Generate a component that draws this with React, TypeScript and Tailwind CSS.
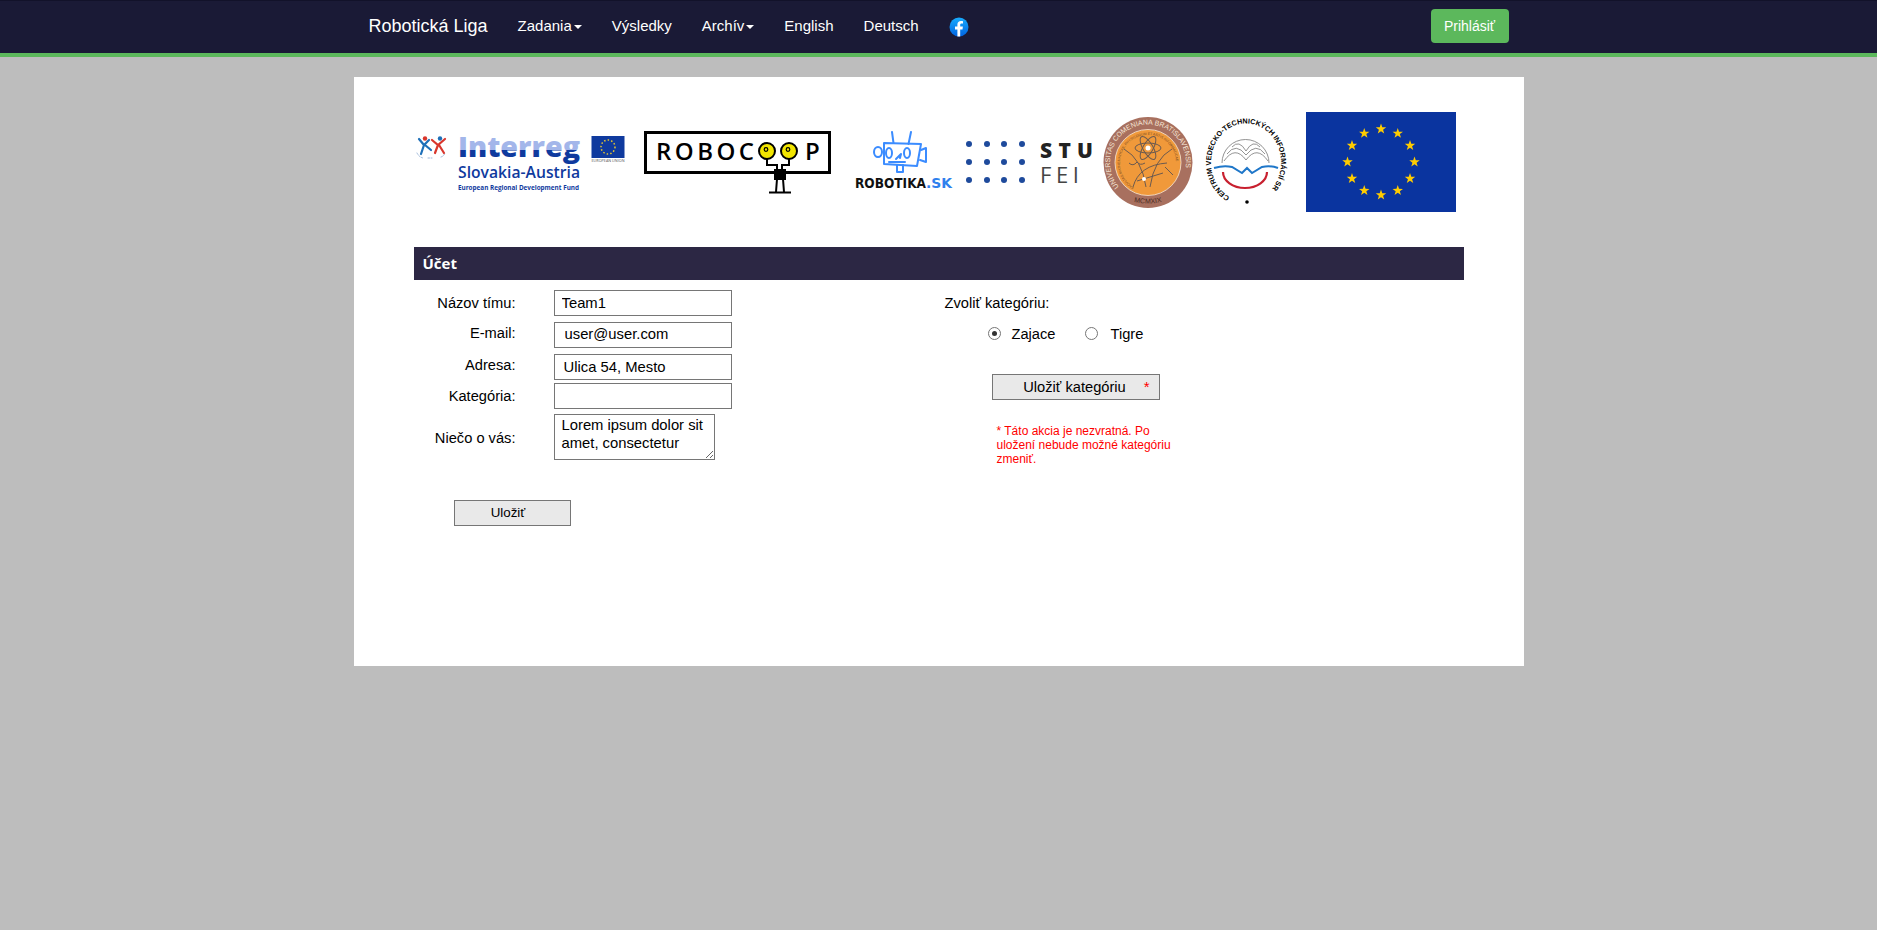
import React from "react";

const sans = "font-['Liberation_Sans',Arial,sans-serif]";

function Caret() {
  return <span className="ml-[2px] inline-block align-middle w-0 h-0 border-x-[4px] border-x-transparent border-t-[4px] border-t-white" />;
}

function NavLink({ children }: { children: React.ReactNode }) {
  return <a className="px-[15px] text-[15px] leading-[20px] text-white whitespace-nowrap">{children}</a>;
}

function Facebook() {
  return (
    <svg width="20" height="20" viewBox="0 0 20 20" className="ml-[15px] mt-[2px]">
      <defs>
        <linearGradient id="fbg" x1="0" y1="0" x2="0" y2="1">
          <stop offset="0" stopColor="#18acfe" />
          <stop offset="1" stopColor="#0163e0" />
        </linearGradient>
      </defs>
      <circle cx="10" cy="10" r="9.5" fill="url(#fbg)" />
      <path d="M11.2 19.4v-7h2.3l.4-2.8h-2.7V8c0-.8.3-1.4 1.5-1.4h1.3V4.2c-.5-.1-1.2-.2-2-.2-2.2 0-3.6 1.3-3.6 3.6v2H6v2.800h2.400v7z" fill="#fff" />
    </svg>
  );
}

function Interreg() {
  return (
    <svg width="210" height="66" viewBox="0 0 210 66" className="ml-[2px]">
      <g fill="none" strokeLinecap="round">
        <circle cx="9" cy="9.500" r="2.200" fill="#d9362c" />
        <circle cx="24" cy="9.500" r="2.200" fill="#1e6fb8" />
        <path d="M3 10l5 6 5-5M8 16l-3 9M9 16l6 5" stroke="#1e6fb8" strokeWidth="2.200" />
        <path d="M16 11l6 5 7-6M22 16l-3 8M23 16l5 8" stroke="#d9362c" strokeWidth="2.200" />
        <path d="M1 24q2 4 6 5M12 29h4M25 28q3-1 4-4" stroke="#9db7d9" strokeWidth="1" strokeDasharray="1.500 1.500" />
      </g>
      <defs>
        <linearGradient id="irg" gradientUnits="userSpaceOnUse" x1="0" y1="7" x2="0" y2="34">
          <stop offset="0.520" stopColor="#a3b6ea" />
          <stop offset="0.530" stopColor="#0f3a9e" />
        </linearGradient>
      </defs>
      <text x="42" y="28" fontFamily="'Open Sans',sans-serif" fontWeight="800" fontSize="29" textLength="122" lengthAdjust="spacingAndGlyphs" fill="url(#irg)">Interreg</text>
      <text x="42" y="49" fontFamily="'Open Sans',sans-serif" fontWeight="600" fontSize="16" textLength="122" lengthAdjust="spacingAndGlyphs" fill="#0f3a9e">Slovakia-Austria</text>
      <text x="42" y="61" fontFamily="'Open Sans',sans-serif" fontWeight="700" fontSize="6.500" textLength="121" lengthAdjust="spacingAndGlyphs" fill="#0f3a9e">European Regional Development Fund</text>
      <rect x="175.500" y="7" width="33" height="22" fill="#0f3a9e" />
      <circle cx="192" cy="18" r="7" fill="none" stroke="#e8c830" strokeWidth="1.500" strokeDasharray="1.500 2.100" />
      <text x="175.500" y="33" fontFamily="'Open Sans',sans-serif" fontSize="3" textLength="33" lengthAdjust="spacingAndGlyphs" fill="#555">EUROPEAN UNION</text>
    </svg>
  );
}

function Robocoop() {
  return (
    <svg width="187" height="63" viewBox="0 0 187 63" className="ml-[18px]">
      <rect x="1.500" y="1.500" width="184" height="40" fill="#fff" stroke="#000" strokeWidth="3" />
      <text x="12" y="29" fontFamily="'Open Sans',sans-serif" fontWeight="600" fontSize="24" textLength="98" fill="#000">ROBOC</text>
      <text x="161" y="29" fontFamily="'Open Sans',sans-serif" fontWeight="600" fontSize="24" fill="#000">P</text>
      <path d="M123 28v6h10v6M145 28v6h-7v6" fill="none" stroke="#000" strokeWidth="2" />
      <circle cx="123" cy="20" r="8" fill="#f2e500" stroke="#000" strokeWidth="2" />
      <circle cx="122" cy="18.500" r="1.800" fill="none" stroke="#000" strokeWidth="1.200" />
      <circle cx="145" cy="20" r="8" fill="#f2e500" stroke="#000" strokeWidth="2" />
      <circle cx="144" cy="18.500" r="1.800" fill="none" stroke="#000" strokeWidth="1.200" />
      <rect x="130" y="38" width="12" height="11" fill="#000" />
      <path d="M133 48l-1 13M139 48l1 13M125 61.500h22" fill="none" stroke="#000" strokeWidth="2" />
    </svg>
  );
}

function Robotika() {
  return (
    <svg width="98" height="62" viewBox="0 0 98 62" className="ml-[24px]">
      <g fill="none" stroke="#3b8cff" strokeWidth="2" strokeLinejoin="round" strokeLinecap="round">
        <path d="M37 1l1.500 11M56 1l-2.500 12" />
        <path d="M29 12L66 13 62 35 29 33Z" />
        <ellipse cx="23" cy="21" rx="4" ry="5" />
        <path d="M66 19l5-2v14l-6-2" />
        <path d="M42 34v7h6v-7" />
        <ellipse cx="34" cy="22" rx="3" ry="5" />
        <ellipse cx="52" cy="22" rx="3" ry="5" />
        <path d="M34 31l16 0M41 28l5-5-1 4" />
      </g>
      <text x="0" y="57" fontFamily="'DejaVu Sans',sans-serif" fontWeight="700" fontSize="14.500" textLength="71" lengthAdjust="spacingAndGlyphs" fill="#111">ROBOTIKA</text>
      <text x="71" y="57" fontFamily="'DejaVu Sans',sans-serif" fontWeight="700" fontSize="14.500" textLength="26" lengthAdjust="spacingAndGlyphs" fill="#2f80ed">.SK</text>
    </svg>
  );
}

function StuFei() {
  const xs = [3, 21, 38, 56];
  const ys = [4, 22, 40];
  return (
    <svg width="128" height="44" viewBox="0 0 128 44" className="ml-[13px]">
      {ys.map((y) => xs.map((x) => <circle key={`${x}-${y}`} cx={x} cy={y} r="3" fill="#1e4a9c" />))}
      <text x="74" y="18" fontFamily="'Open Sans',sans-serif" fontWeight="800" fontSize="21" textLength="53" fill="#222">STU</text>
      <text x="74" y="43" fontFamily="'Open Sans',sans-serif" fontSize="22" textLength="39" fill="#444">FEI</text>
    </svg>
  );
}

function Seal() {
  return (
    <svg width="90" height="91" viewBox="0 0 90 91" className="ml-[9px]">
      <defs>
        <path id="ukt" d="M15.900 69.900A38 38 0 1 1 74.100 69.900" />
        <path id="ukb" d="M27 84Q45 89 63 84" />
        <path id="uki" d="M31 70.200A28 28 0 1 1 59 70.200" />
      </defs>
      <ellipse cx="45" cy="45.500" rx="44.500" ry="45.500" fill="#a8705f" />
      <circle cx="45" cy="45.500" r="33" fill="#f0993a" stroke="#f6e6d6" strokeWidth="0.800" />
      <text fontFamily="'Liberation Sans',sans-serif" fontSize="7" fill="#f6e6d6"><textPath href="#ukt">UNIVERSITAS COMENIANA BRATISLAVENSIS</textPath></text>
      <text fontFamily="'Liberation Sans',sans-serif" fontSize="7" textAnchor="middle" fill="#4a2c22"><textPath href="#ukb" startOffset="50%">MCMXIX</textPath></text>
      <text fontFamily="'Liberation Sans',sans-serif" fontSize="3.500" fill="#7a4a22"><textPath href="#uki">FACULTAS MATHEMATICAE, PHYSICORUM ET ARTIS INFORMATICAE</textPath></text>
      <g fill="none" stroke="#6b5a50" strokeWidth="1">
        <ellipse cx="45" cy="31" rx="13" ry="5" transform="rotate(60 45 31)" />
        <ellipse cx="45" cy="31" rx="13" ry="5" transform="rotate(-60 45 31)" />
        <ellipse cx="45" cy="31" rx="13" ry="5" />
        <path d="M21 32q18 10 22 38M69 32q-18 10-22 38M30 70q6-22 34-24M34 64l26-8M26 46q4 4 8-1 3 4 8 1M62 50l8 8" />
      </g>
      <circle cx="45" cy="31" r="2.500" fill="#fff" />
      <circle cx="41" cy="62" r="2" fill="#fff" />
    </svg>
  );
}

function Cvti() {
  return (
    <svg width="88" height="91" viewBox="0 0 88 91" className="ml-[9px]">
      <defs>
        <path id="cvt" d="M27.700 80A35 39 0 1 1 60.300 80" />
      </defs>
      <text fontFamily="'Liberation Sans',sans-serif" fontWeight="700" fontSize="7.200" fill="#000"><textPath href="#cvt">CENTRUM VEDECKO-TECHNICKÝCH INFORMÁCIÍ SR</textPath></text>
      <circle cx="45" cy="85" r="1.800" fill="#000" />
      <path d="M20 46a23.500 23.500 0 0 1 47 0" fill="none" stroke="#777" strokeWidth="0.800" />
      <path d="M22 44q11-16 22-1q11-15 22 1M25 37q9-12 19 1q10-13 19-1M30 30q7-8 14 4q7-12 14-4" fill="none" stroke="#777" strokeWidth="0.800" />
      <path d="M12 51q10-3 18-1l10 6 5-5 5 5 10-6q8-2 16 1" fill="none" stroke="#1f77c9" strokeWidth="2" />
      <path d="M21 55a22 16 0 0 0 44 0" fill="none" stroke="#c8202f" strokeWidth="2.200" />
    </svg>
  );
}

function EuFlag() {
  const stars = Array.from({ length: 12 }, (_, i) => {
    const a = (i * Math.PI) / 6;
    const cx = 75 + 33.500 * Math.sin(a);
    const cy = 50 - 33 * Math.cos(a);
    const pts = Array.from({ length: 10 }, (_, k) => {
      const r = k % 2 === 0 ? 5.500 : 2.200;
      const t = (k * Math.PI) / 5;
      return `${(cx + r * Math.sin(t)).toFixed(2)},${(cy - r * Math.cos(t)).toFixed(2)}`;
    }).join(" ");
    return <polygon key={i} points={pts} fill="#ffcc00" />;
  });
  return (
    <svg width="150" height="100" viewBox="0 0 150 100" className="ml-[16px]">
      <rect width="150" height="100" fill="#0a349f" />
      {stars}
    </svg>
  );
}

export default function App() {
  return (
    <div className={`min-h-screen bg-[#bdbdbd] ${sans} text-black`}>
      <nav className="h-[57px] bg-[#1a1a36] border-t border-t-[#12122a] border-b-4 border-b-[#5cb85c]">
        <div className="w-[1170px] mx-auto flex items-center h-[50px]">
          <a className="pl-[15px] pr-[15px] text-[18px] text-white whitespace-nowrap">Robotická Liga</a>
          <NavLink>Zadania<Caret /></NavLink>
          <NavLink>Výsledky</NavLink>
          <NavLink>Archív<Caret /></NavLink>
          <NavLink>English</NavLink>
          <NavLink>Deutsch</NavLink>
          <Facebook />
          <button className="ml-auto mr-[15px] w-[78px] h-[34px] rounded-[4px] bg-[#5cb85c] text-white text-[14px]">Prihlásiť</button>
        </div>
      </nav>

      <main className="w-[1170px] h-[589px] mx-auto mt-[20px] bg-white pt-[35px]">
        <div className="flex items-center h-[100px] pl-[60px]">
          <Interreg />
          <Robocoop />
          <Robotika />
          <StuFei />
          <Seal />
          <Cvti />
          <EuFlag />
        </div>

        <h2 className="mt-[35px] mx-[60px] h-[33px] bg-[#2c2744] text-white pl-[9px] flex items-center text-[15px] font-bold font-['Open_Sans',sans-serif]">Účet</h2>

        <div className="flex mx-[60px]">
          <form className="w-[531px] pt-[10px] text-[14.67px]">
            <div className="flex items-center h-[26px]">
              <label className="w-[102px] text-right">Názov tímu:</label>
              <input defaultValue="Team1" className="ml-[38px] w-[178px] h-[26px] border border-[#767676] pl-[7px] pb-[1px] text-[14.8px]" />
            </div>
            <div className="flex items-center h-[26px] mt-[6px]">
              <label className="w-[102px] text-right mb-[4px]">E-mail:</label>
              <input defaultValue="user@user.com" className="ml-[38px] w-[178px] h-[26px] border border-[#767676] pl-[10px] pb-[3px] text-[14.8px]" />
            </div>
            <div className="flex items-center h-[26px] mt-[6px]">
              <label className="w-[102px] text-right mb-[4px]">Adresa:</label>
              <input defaultValue="Ulica 54, Mesto" className="ml-[38px] w-[178px] h-[26px] border border-[#767676] pl-[9px] pb-[1px] text-[14.8px]" />
            </div>
            <div className="flex items-center h-[26px] mt-[3px]">
              <label className="w-[102px] text-right">Kategória:</label>
              <input className="ml-[38px] w-[178px] h-[26px] border border-[#767676] pl-[7px]" />
            </div>
            <div className="flex items-center h-[46px] mt-[5px]">
              <label className="w-[102px] text-right mt-[2px]">Niečo o vás:</label>
              <textarea defaultValue="Lorem ipsum dolor sit amet, consectetur" className="ml-[38px] w-[161px] h-[46px] border border-[#767676] px-[7px] pt-[1px] text-[14.8px] leading-[18px]" />
            </div>
            <button type="button" className="block mt-[40px] ml-[40px] w-[117px] h-[26px] bg-[#e9e9e9] border border-[#767676] text-[13.33px] text-center pr-[8px]">Uložiť</button>
          </form>

          <div className="pt-[14px] text-[14.67px]">
            <p className="leading-[18px]">Zvoliť kategóriu:</p>
            <div className="flex items-center mt-[13px] ml-[43px] h-[18px]">
              <span className="w-[13px] h-[13px] mb-[1px] rounded-full border border-[#767676] flex items-center justify-center">
                <span className="w-[5px] h-[5px] rounded-full bg-[#333]" />
              </span>
              <span className="ml-[11px] mb-[1px]">Zajace</span>
              <span className="ml-[29px] w-[13px] h-[13px] mb-[1px] rounded-full border border-[#767676]" />
              <span className="ml-[13px]">Tigre</span>
            </div>
            <button type="button" className="relative block mt-[31px] ml-[47px] w-[168px] h-[26px] bg-[#e9e9e9] border border-[#767676] text-[14.67px] pr-[2px]">
              Uložiť kategóriu
              <span className="absolute right-[9px] top-[1px] text-[#f00] text-[15px]">*</span>
            </button>
            <p className="mt-[24px] ml-[52px] w-[182px] text-[12px] leading-[14px] text-[#f00]">* Táto akcia je nezvratná. Po uložení nebude možné kategóriu zmeniť.</p>
          </div>
        </div>
      </main>
    </div>
  );
}
